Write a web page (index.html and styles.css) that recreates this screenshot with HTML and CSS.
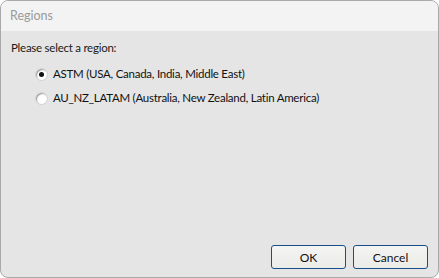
FILE: index.html
```html
<!DOCTYPE html>
<html lang="en">
<head>
    <meta charset="UTF-8">
    <title>Regions</title>
    <link rel="stylesheet" href="styles.css">
</head>
<body>
    <div class="window">
        <div class="title-bar">Regions</div>
        <div class="content">
            <p class="prompt">Please select a region:</p>
            <div class="options">
                <label class="option">
                    <input type="radio" name="region" value="astm" checked>
                    <span class="radio"></span>
                    <span>ASTM (USA, Canada, India, Middle East)</span>
                </label>
                <label class="option">
                    <input type="radio" name="region" value="au_nz_latam">
                    <span class="radio"></span>
                    <span>AU_NZ_LATAM (Australia, New Zealand, Latin America)</span>
                </label>
            </div>
            <div class="buttons">
                <button class="btn">OK</button>
                <button class="btn">Cancel</button>
            </div>
        </div>
    </div>
</body>
</html>
```

FILE: styles.css
```css
body, html {
    height: 100%;
    margin: 0;
    padding: 0;
    background-color: #ffffff;
    font-family: Lato, "Liberation Sans", sans-serif;
    font-size: 11.5px;
    letter-spacing: -0.25px;
    overflow: hidden;
}
.window {
    display: flex;
    flex-direction: column;
    width: 439px;
    height: 278px;
    box-sizing: border-box;
    border: 1px solid #a9a9a9;
    border-radius: 8px;
    background-color: #e5e5e5;
    overflow: hidden;
}
.title-bar {
    height: 30px;
    line-height: 30px;
    padding-left: 9px;
    background-color: #f3f3f3;
    color: #9a9a9a;
    font-size: 12.5px;
    letter-spacing: 0;
}
.content {
    flex: 1;
    display: flex;
    flex-direction: column;
    padding: 9px 10px 8px 10px;
}
.prompt {
    margin: 0;
    color: #1a1a1a;
    line-height: 16px;
}
.options {
    display: flex;
    flex-direction: column;
    gap: 8px;
    padding: 10px 0 0 24px;
}
.option {
    display: flex;
    align-items: center;
    gap: 5px;
    color: #111;
    line-height: 16px;
}
.option input {
    display: none;
}
.radio {
    width: 11px;
    height: 11px;
    border-radius: 50%;
    border: 1px solid #d0d0d0;
    background: #ffffff;
    box-shadow: inset 1px 1px 1px #9a9a9a;
    position: relative;
}
.option input:checked + .radio::after {
    content: "";
    position: absolute;
    left: 3px;
    top: 3px;
    width: 5px;
    height: 5px;
    border-radius: 50%;
    background: #111;
}
.buttons {
    margin-top: auto;
    display: flex;
    justify-content: flex-end;
    gap: 7px;
}
.btn {
    width: 75px;
    height: 24px;
    padding: 0;
    font-family: inherit;
    font-size: 12px;
    letter-spacing: 0;
    color: #111;
    background: linear-gradient(#f4f4f2, #ebebe8);
    border: 1px solid #184f8a;
    border-radius: 3px;
}
```
